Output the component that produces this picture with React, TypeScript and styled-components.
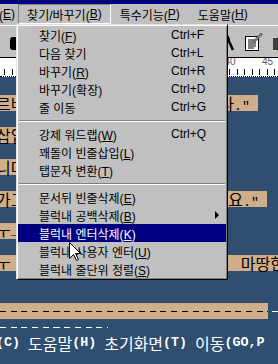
import React from 'react';
import styled, { createGlobalStyle } from 'styled-components';

const GlobalStyle = createGlobalStyle`
  html, body {
    margin: 0;
    padding: 0;
  }
  body {
    width: 278px;
    height: 364px;
    overflow: hidden;
    background: #2f4e70;
  }
`;

const Screen = styled.div`
  position: relative;
  width: 278px;
  height: 364px;
  overflow: hidden;
  display: flex;
  flex-direction: column;
  font-family: 'Liberation Sans', 'Noto Sans CJK KR', sans-serif;
  font-size: 12px;
  color: #000;
`;

const TitleStrip = styled.div`
  flex: none;
  height: 4px;
  background: #000080;
`;

const MenuBar = styled.div`
  flex: none;
  height: 21px;
  background: #c0c0c0;
  display: flex;
  align-items: flex-start;
`;

const MenuTitle = styled.div<{ $open?: boolean }>`
  flex: none;
  height: 20px;
  box-sizing: border-box;
  padding: 0 8px;
  display: flex;
  align-items: center;
  white-space: nowrap;
  border: 1px solid;
  border-color: ${(p) => (p.$open ? '#808080 #fff #fff #808080' : 'transparent')};
`;

const CutTitle = styled(MenuTitle)`
  margin-left: -32px;
  padding-right: 2px;
`;

const Toolbar = styled.div`
  flex: none;
  height: 32px;
  box-sizing: border-box;
  background: #c0c0c0;
  border-top: 1px solid #fff;
  display: flex;
  align-items: center;
`;

const ToolButton = styled.div`
  flex: none;
  width: 24px;
  height: 22px;
  display: flex;
  align-items: center;
  justify-content: center;
`;

const ToolRight = styled.div`
  margin-left: auto;
  margin-right: -11px;
  display: flex;
  align-items: center;
`;

const Ruler = styled.div`
  flex: none;
  height: 18px;
  background: #fff;
  border-top: 1px solid #000;
  border-bottom: 1px dotted #000;
  display: flex;
  align-items: flex-end;
  padding-left: 4px;
  overflow: hidden;
`;

const Tick = styled.div`
  flex: none;
  position: relative;
  width: 7.5px;
  height: 6px;
  margin-bottom: 1px;
  box-sizing: border-box;
  border-left: 1px solid #000;
`;

const TickLabel = styled.span`
  position: absolute;
  bottom: 8px;
  left: 0;
  transform: translateX(-50%);
  font-size: 10px;
  line-height: 10px;
  color: #606060;
`;

const Doc = styled.div`
  flex: 1;
  background: #2f4e70;
  padding-top: 2px;
  font-family: 'Noto Sans CJK KR', sans-serif;
  font-size: 16px;
  line-height: 16px;
`;

const Line = styled.div`
  height: 16px;
  margin-left: -4px;
  display: flex;
  white-space: pre;
  color: #fff;
`;

const Hl = styled.span<{ $w?: number }>`
  flex: none;
  display: flex;
  height: 16px;
  width: ${(p) => (p.$w ? `${p.$w}px` : 'auto')};
  background: #d0ae8a;
  color: #000;
`;

const Tail = styled.span`
  margin-left: auto;
`;

const Half = styled.span<{ $bold?: boolean }>`
  font-family: 'Liberation Mono', monospace;
  font-size: 13.33px;
  font-weight: ${(p) => (p.$bold ? 700 : 400)};
`;

const Dashes = styled.span<{ $w: number; $color: string; $bg?: string }>`
  flex: none;
  width: ${(p) => p.$w}px;
  height: 16px;
  background-color: ${(p) => p.$bg || 'transparent'};
  background-image: repeating-linear-gradient(
    90deg,
    ${(p) => p.$color} 0 6px,
    transparent 6px 10.7px
  );
  background-size: 100% 1px;
  background-position: 4px 8px;
  background-repeat: no-repeat;
`;

const Dropdown = styled.div`
  position: absolute;
  left: 16px;
  top: 24px;
  width: 212px;
  box-sizing: border-box;
  padding: 1px;
  background: #c0c0c0;
  border: 1px solid;
  border-color: #dfdfdf #000 #000 #dfdfdf;
  box-shadow: inset 1px 1px #fff, inset -1px -1px #808080;
`;

const Item = styled.div<{ $active?: boolean }>`
  height: 18px;
  display: flex;
  align-items: center;
  padding-left: 21px;
  white-space: nowrap;
  background: ${(p) => (p.$active ? '#000080' : 'transparent')};
  color: ${(p) => (p.$active ? '#fff' : '#000')};
`;

const Label = styled.span`
  flex: none;
  width: 132px;
`;

const Arrow = styled.span`
  margin-left: auto;
  margin-right: 7px;
  width: 0;
  height: 0;
  border-top: 4px solid transparent;
  border-bottom: 4px solid transparent;
  border-left: 4px solid #000;
`;

const Separator = styled.div`
  height: 9px;
  display: flex;
  align-items: center;
  padding: 0 1px;
  &::after {
    content: '';
    flex: 1;
    height: 0;
    border-top: 1px solid #808080;
    border-bottom: 1px solid #fff;
  }
`;

const Cursor = styled.svg`
  position: absolute;
  left: 69px;
  top: 242px;
`;

type Entry = { label: React.ReactNode; key?: string; sub?: boolean; active?: boolean } | 'sep';

const u = (c: string) => <u>{c}</u>;

const entries: Entry[] = [
  { label: <>찾기({u('F')})</>, key: 'Ctrl+F' },
  { label: '다음 찾기', key: 'Ctrl+L' },
  { label: <>바꾸기({u('R')})</>, key: 'Ctrl+R' },
  { label: '바꾸기(확장)', key: 'Ctrl+D' },
  { label: '줄 이동', key: 'Ctrl+G' },
  'sep',
  { label: <>강제 워드랩({u('W')})</>, key: 'Ctrl+Q' },
  { label: <>꽤돌이 빈줄삽입({u('L')})</> },
  { label: <>탭문자 변환({u('T')})</> },
  'sep',
  { label: <>문서뒤 빈줄삭제({u('E')})</> },
  { label: <>블럭내 공백삭제({u('B')})</>, sub: true },
  { label: <>블럭내 엔터삭제({u('K')})</>, active: true },
  { label: <>블럭내 사용자 엔터({u('U')})</> },
  { label: <>블럭내 줄단위 정렬({u('S')})</> },
];

const ticks = Array.from({ length: 38 }, (_, i) => i);

export default function App() {
  return (
    <>
      <GlobalStyle />
      <Screen>
        <TitleStrip />
        <MenuBar>
          <CutTitle>편집({u('E')})</CutTitle>
          <MenuTitle $open>찾기/바꾸기({u('B')})</MenuTitle>
          <MenuTitle>특수기능({u('P')})</MenuTitle>
          <MenuTitle>도움말({u('H')})</MenuTitle>
        </MenuBar>
        <Toolbar>
          <ToolButton>
            <svg width="16" height="18" viewBox="0 0 16 18">
              <rect x="6" y="4" width="9" height="13" rx="3" fill="#000" />
            </svg>
          </ToolButton>
          <ToolRight>
            <ToolButton>
              <svg width="18" height="18" viewBox="0 0 18 18">
                <circle cx="5" cy="6" r="4" fill="none" stroke="#000" strokeWidth="1.5" />
                <line x1="7" y1="4" x2="13" y2="17" stroke="#000" strokeWidth="2.5" />
              </svg>
            </ToolButton>
            <ToolButton>
              <svg width="19" height="20" viewBox="0 0 19 20">
                <rect x="1.5" y="4.5" width="13" height="14" fill="#fff" stroke="#000" />
                <path d="M4 8h8M4 10h8M4 12h8M4 14h8M4 16h6" stroke="#000" />
                <path d="M9 9 L17 1 L18.5 2.5 L10.5 10.5 Z" fill="#808080" stroke="#404040" strokeWidth="0.6" />
              </svg>
            </ToolButton>
            <ToolButton>
              <svg width="16" height="16" viewBox="0 0 16 16">
                <rect x="4" y="4" width="10" height="12" fill="#404040" />
              </svg>
            </ToolButton>
          </ToolRight>
        </Toolbar>
        <Ruler>
          {ticks.map((k) => (
            <Tick key={k}>{k % 5 === 0 && k >= 30 ? <TickLabel>{k + 10}</TickLabel> : null}</Tick>
          ))}
        </Ruler>
        <Doc>
          <Line />
          <Line>
            <Hl $w={262}>
              <span>르바</span>
              <Tail>
                다<Half>." </Half>
              </Tail>
            </Hl>
          </Line>
          <Line />
          <Line>
            <Hl $w={40}>삽입</Hl>
          </Line>
          <Line />
          <Line>
            <Hl $w={40}>니다</Hl>
          </Line>
          <Line />
          <Line>
            <Hl $w={271}>
              <span>가고</span>
              <Tail>
                요<Half>." </Half>
              </Tail>
            </Hl>
          </Line>
          <Line />
          <Line>
            <Hl $w={40}>
              ㅜ<Half>_</Half>ㅜ
            </Hl>
          </Line>
          <Line />
          <Line>
            <Hl $w={289}>
              <span>ㅜ</span>
              <Tail>마땅한</Tail>
            </Hl>
          </Line>
          <Line />
          <Line />
          <Line>
            <Dashes $w={272} $color="#000" $bg="#d0ae8a" />
            <Dashes $w={40} $color="#fff" />
          </Line>
          <Line>
            <Dashes $w={112} $color="#fff" />
          </Line>
          <Line>
            <Half $bold>(C) </Half>도움말<Half $bold>(H) </Half>초기화면<Half $bold>(T) </Half>이동
            <Half $bold>(GO,P</Half>
          </Line>
        </Doc>
        <Dropdown>
          {entries.map((e, i) =>
            e === 'sep' ? (
              <Separator key={i} />
            ) : (
              <Item key={i} $active={e.active}>
                <Label>{e.label}</Label>
                {e.key}
                {e.sub && <Arrow />}
              </Item>
            )
          )}
        </Dropdown>
        <Cursor width="13" height="20" viewBox="0 0 13 20">
          <path
            d="M0.5 0.5 V16.5 L4.5 12.5 L7.5 18.5 L9.5 17.5 L6.5 11.5 H11.5 Z"
            fill="#fff"
            stroke="#000"
            strokeWidth="1"
          />
        </Cursor>
      </Screen>
    </>
  );
}
